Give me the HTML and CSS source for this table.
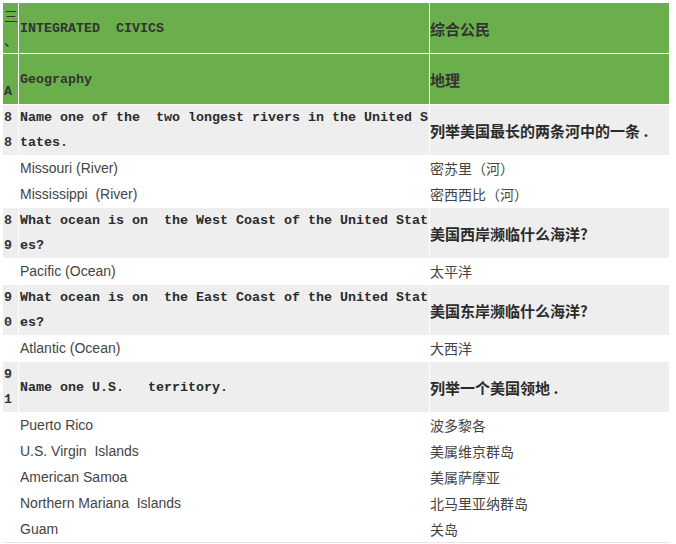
FILE: index.html
```html
<!DOCTYPE html>
<html lang="zh-CN">
<head>
<meta charset="utf-8">
<title>Integrated Civics</title>
<link rel="stylesheet" href="styles.css">
</head>
<body>
<table class="civics">
  <colgroup>
    <col class="c-num">
    <col class="c-en">
    <col class="c-zh">
  </colgroup>
  <tbody>
    <tr class="head">
      <td class="num cn">三、</td>
      <td class="en q">INTEGRATED&nbsp; CIVICS</td>
      <td class="zh">综合公民</td>
    </tr>
    <tr class="head">
      <td class="num"><br>A</td>
      <td class="en q">Geography</td>
      <td class="zh">地理</td>
    </tr>
    <tr class="question">
      <td class="num">88</td>
      <td class="en q">Name one of the&nbsp; two longest rivers in the United States.</td>
      <td class="zh">列举美国最长的两条河中的一条 .</td>
    </tr>
    <tr class="answer">
      <td class="num"></td>
      <td class="en">Missouri (River)</td>
      <td class="zh">密苏里（河）</td>
    </tr>
    <tr class="answer">
      <td class="num"></td>
      <td class="en">Mississippi&nbsp; (River)</td>
      <td class="zh">密西西比（河）</td>
    </tr>
    <tr class="question">
      <td class="num">89</td>
      <td class="en q">What ocean is on&nbsp; the West Coast of the United States?</td>
      <td class="zh">美国西岸濒临什么海洋?</td>
    </tr>
    <tr class="answer">
      <td class="num"></td>
      <td class="en">Pacific (Ocean)</td>
      <td class="zh">太平洋</td>
    </tr>
    <tr class="question">
      <td class="num">90</td>
      <td class="en q">What ocean is on&nbsp; the East Coast of the United States?</td>
      <td class="zh">美国东岸濒临什么海洋?</td>
    </tr>
    <tr class="answer">
      <td class="num"></td>
      <td class="en">Atlantic (Ocean)</td>
      <td class="zh">大西洋</td>
    </tr>
    <tr class="question">
      <td class="num">91</td>
      <td class="en q">Name one U.S.&nbsp;&nbsp; territory.</td>
      <td class="zh">列举一个美国领地 .</td>
    </tr>
    <tr class="answer">
      <td class="num"></td>
      <td class="en">Puerto Rico</td>
      <td class="zh">波多黎各</td>
    </tr>
    <tr class="answer">
      <td class="num"></td>
      <td class="en">U.S. Virgin&nbsp; Islands</td>
      <td class="zh">美属维京群岛</td>
    </tr>
    <tr class="answer">
      <td class="num"></td>
      <td class="en">American Samoa</td>
      <td class="zh">美属萨摩亚</td>
    </tr>
    <tr class="answer">
      <td class="num"></td>
      <td class="en">Northern Mariana&nbsp; Islands</td>
      <td class="zh">北马里亚纳群岛</td>
    </tr>
    <tr class="answer last">
      <td class="num"></td>
      <td class="en">Guam</td>
      <td class="zh">关岛</td>
    </tr>
  </tbody>
</table>
</body>
</html>
```

FILE: styles.css
```css
html, body {
  margin: 0;
  padding: 0;
  background: #ffffff;
}

body {
  padding: 3px 0 0 3px;
  font-family: "Liberation Sans", Arial, "Noto Sans CJK SC", sans-serif;
  color: #333333;
}

.civics {
  border-collapse: separate;
  border-spacing: 0;
  table-layout: fixed;
  width: 667px;
}

.c-num { width: 16px; }
.c-en { width: 411px; }
.c-zh { width: 240px; }

.civics td {
  border-right: 1px solid #ffffff;
  border-bottom: 1px solid #ffffff;
  padding: 0 0 0 1px;
  line-height: 25px;
  vertical-align: middle;
  word-break: break-all;
  overflow-wrap: anywhere;
}

.civics tr.last td {
  border-bottom: 1px solid #e6e6e6;
}

.civics .head td {
  background: #6aaf4b;
  height: 50px;
}

.civics .question td {
  background: #eeeeee;
  height: 50px;
}

.civics .answer td {
  background: #ffffff;
  height: 25px;
}

.num {
  font-family: "Liberation Mono", monospace;
  font-size: 13.333px;
  font-weight: 700;
  color: #333333;
}

.civics td.cn {
  font-family: "Noto Sans CJK SC", sans-serif;
  font-weight: 400;
  font-size: 14px;
}

.en {
  font-size: 14px;
  color: #444444;
}

.q {
  font-family: "Liberation Mono", monospace;
  font-size: 13.333px;
  font-weight: 700;
  color: #2b2b2b;
}

.civics td.zh {
  padding-left: 0;
  font-family: "Noto Sans CJK SC", sans-serif;
  font-size: 14px;
  color: #444444;
}

.civics .head td.zh,
.civics .question td.zh {
  font-size: 15px;
  font-weight: 700;
  color: #2b2b2b;
}

.head .q,
.civics .head td.zh {
  color: #333333;
}
```
